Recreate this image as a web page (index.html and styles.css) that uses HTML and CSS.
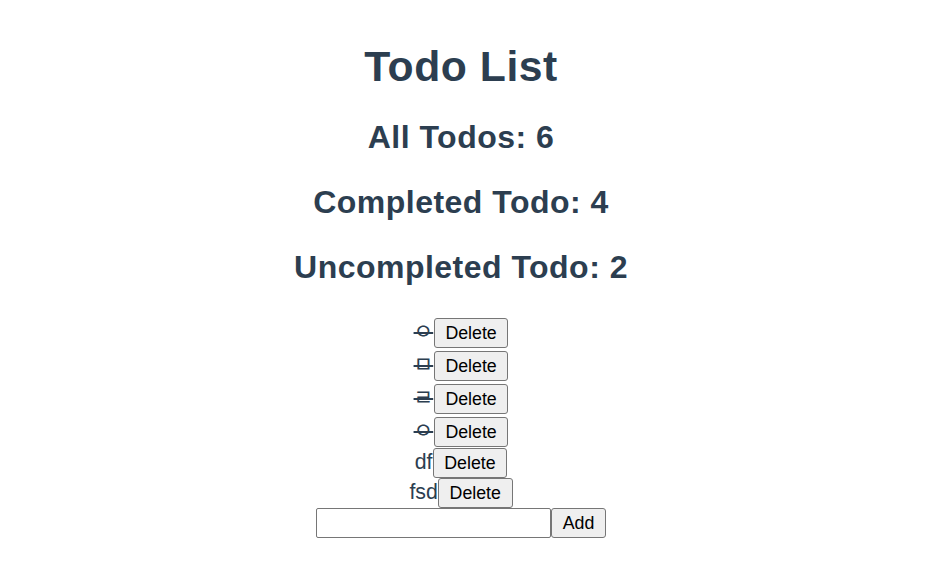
FILE: index.html
```html
<!DOCTYPE html>
<html lang="en">
<head>
<meta charset="utf-8">
<title>Todo List</title>
<link rel="stylesheet" href="styles.css">
</head>
<body>
<div class="app">
  <h1 class="title">Todo List</h1>
  <h2 class="stat">All Todos: 6</h2>
  <h2 class="stat">Completed Todo: 4</h2>
  <h2 class="stat">Uncompleted Todo: 2</h2>
  <div class="list">
    <div class="item"><span class="text done">ㅇ</span><button class="btn">Delete</button></div>
    <div class="item"><span class="text done">ㅁ</span><button class="btn">Delete</button></div>
    <div class="item"><span class="text done">ㄹ</span><button class="btn">Delete</button></div>
    <div class="item"><span class="text done">ㅇ</span><button class="btn">Delete</button></div>
    <div class="item"><span class="text">df</span><button class="btn">Delete</button></div>
    <div class="item"><span class="text">fsd</span><button class="btn">Delete</button></div>
  </div>
  <div class="add-row"><input class="field" type="text"><button class="btn">Add</button></div>
</div>
</body>
</html>
```
FILE: styles.css
```css
html, body {
  margin: 0;
  padding: 0;
  background: #ffffff;
}

body {
  margin: 0 29px 0 8px;
}

.app {
  font-family: "Liberation Sans", Arial, Helvetica, "Noto Sans CJK KR", sans-serif;
  font-size: 21.33px;
  color: #2c3e50;
  text-align: center;
}

.title {
  font-size: 42.67px;
  line-height: 49px;
  font-weight: bold;
  letter-spacing: 0.55px;
  margin: 42px 0 28px;
}

.stat {
  font-size: 32px;
  line-height: 37px;
  font-weight: bold;
  letter-spacing: 0.48px;
  margin: 27.8px 0;
}

.list {
  margin: 30.3px 0 0;
}

.item {
  display: flex;
  justify-content: center;
  align-items: baseline;
}

.text {
  font-family: "Liberation Sans", Arial, "Noto Sans CJK KR", sans-serif;
  line-height: 24px;
}

.done {
  padding: 4.5px 0.5px 4.5px 0;
  text-decoration: line-through;
}

.btn {
  font-family: "Liberation Sans", Arial, sans-serif;
  font-size: 17.78px;
  line-height: 20px;
  box-sizing: border-box;
  height: 30px;
  color: #000000;
  background: #efefef;
  border: 1px solid #767676;
  border-radius: 3px;
  padding: 4px 10.7px;
  margin: 0;
}

.add-row {
  display: flex;
  justify-content: center;
  align-items: flex-start;
}

.field {
  font-family: "Liberation Sans", Arial, sans-serif;
  font-size: 17.78px;
  line-height: 20px;
  box-sizing: border-box;
  width: 235px;
  height: 30px;
  padding: 1px 3px;
  margin: 0;
  border: 1px solid #767676;
  border-radius: 2px;
  background: #ffffff;
  color: #000000;
}
```
